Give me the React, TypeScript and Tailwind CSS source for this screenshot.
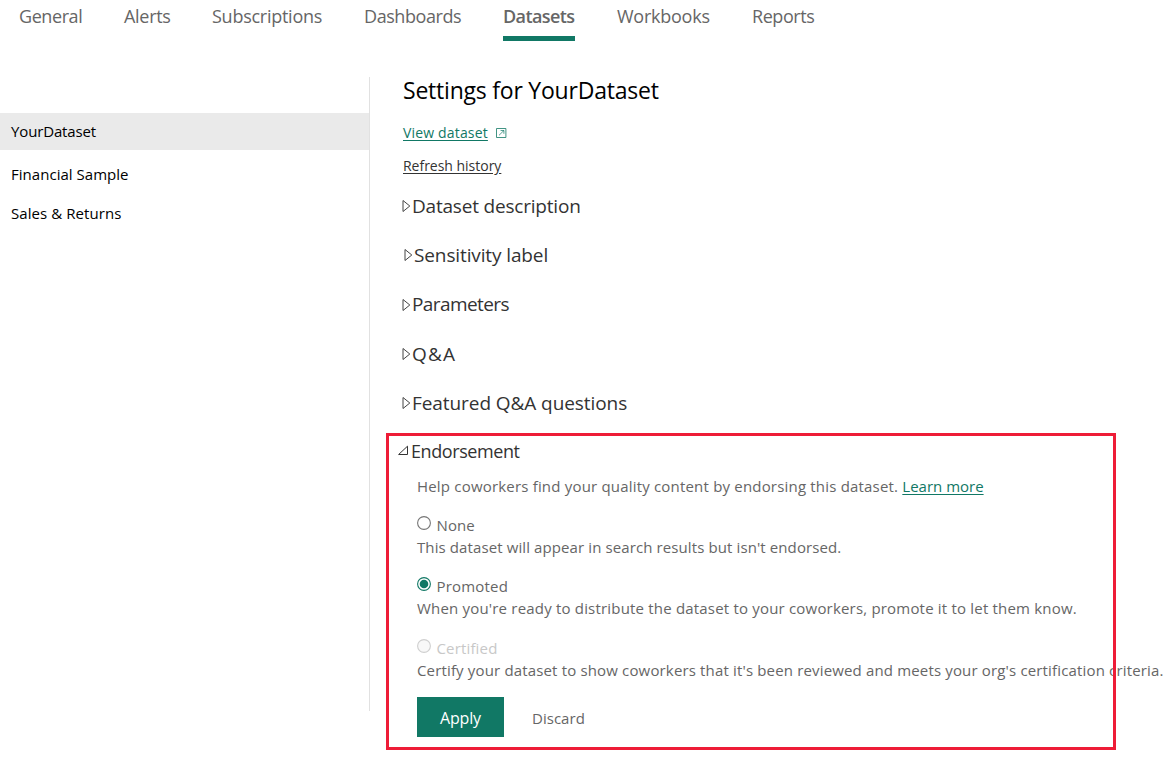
import { useState } from 'react';

const tabs = [
  { label: 'General', className: 'w-[63px] tracking-[-0.42px]' },
  { label: 'Alerts', className: 'w-[46px] tracking-[-0.3px]' },
  { label: 'Subscriptions', className: 'w-[110px] tracking-[-0.26px]' },
  { label: 'Dashboards', className: 'w-[97px] tracking-[-0.43px]' },
  { label: 'Datasets', className: 'w-[72px] tracking-[-0.6px]' },
  { label: 'Workbooks', className: 'w-[93px] tracking-[-0.25px]' },
  { label: 'Reports', className: 'w-[63px] tracking-[-0.45px]' },
];

const sections = [
  { label: 'Dataset description', className: 'tracking-[-0.2px]' },
  { label: 'Sensitivity label', className: 'pl-[2px] tracking-[-0.12px]' },
  { label: 'Parameters', className: 'tracking-[-0.6px]' },
  { label: 'Q&A', className: 'tracking-[1.2px]' },
  { label: 'Featured Q&A questions', className: 'tracking-[-0.07px]' },
];

const options = [
  {
    id: 'none',
    label: 'None',
    text: "This dataset will appear in search results but isn't endorsed.",
    className: 'mt-[17px] tracking-[0.105px]',
  },
  {
    id: 'promoted',
    label: 'Promoted',
    text: "When you're ready to distribute the dataset to your coworkers, promote it to let them know.",
    className: 'mt-[17px] tracking-[0.19px]',
  },
  {
    id: 'certified',
    label: 'Certified',
    text: "Certify your dataset to show coworkers that it's been reviewed and meets your org's certification criteria.",
    className: 'mt-[18px] tracking-[0.157px]',
    disabled: true,
  },
];

function Radio({ checked, disabled }: { checked: boolean; disabled?: boolean }) {
  return (
    <svg width="14" height="14" viewBox="0 0 14 14" className="mt-[2px] shrink-0">
      <circle
        cx="7"
        cy="7"
        r="6.4"
        fill={disabled ? '#f8f8f8' : '#fff'}
        stroke={disabled ? '#cfcfcf' : checked ? '#117865' : '#767676'}
        strokeWidth="1.1"
      />
      {checked && <circle cx="7" cy="7" r="4.3" fill="#117865" />}
    </svg>
  );
}

export default function App() {
  const [selected, setSelected] = useState('promoted');

  return (
    <div className="flex h-[758px] w-[1164px] flex-col overflow-hidden bg-white font-['Open_Sans','Noto_Sans',sans-serif]">
      <nav className="flex h-[41px] gap-[42px] pl-[19px] text-[18px] leading-[32px] text-[#666]">
        {tabs.map((t) => (
          <a
            key={t.label}
            className={`h-[41px] shrink-0 whitespace-nowrap ${t.className} ${
              t.label === 'Datasets' ? 'border-b-[5px] border-[#117865] font-semibold' : ''
            }`}
          >
            {t.label}
          </a>
        ))}
      </nav>

      <div className="flex flex-1">
        <aside className="mt-[36px] h-[634px] w-[370px] shrink-0 border-r border-[#e1e1e1] pt-[36px] text-[15px] text-black">
          <div className="h-[37px] bg-[#eaeaea] pl-[11px] leading-[37px] tracking-[-0.14px]">YourDataset</div>
          <div className="mt-[5px] pl-[11px] leading-[39px] tracking-[0.03px]">Financial Sample</div>
          <div className="pl-[11px] leading-[39px] tracking-[0.07px]">Sales &amp; Returns</div>
        </aside>

        <main className="min-w-0 flex-1 whitespace-nowrap pt-[33px]">
          <h1 className="pl-[33px] text-[23px] leading-[32px] tracking-[-0.22px] text-black">
            Settings for YourDataset
          </h1>
          <div className="mt-[17px] flex items-center pl-[33px] text-[14px] leading-[20px]">
            <a className="tracking-[0.17px] text-[#117865] underline underline-offset-2">View dataset</a>
            <svg
              width="11"
              height="10"
              viewBox="0 0 11 10"
              fill="none"
              stroke="#117865"
              className="ml-[8px]"
            >
              <path d="M.5.5h9.4v9H.5z" strokeWidth=".8" />
              <path d="M4.6 2.5h3.3v3.3M7.9 2.5 3 7.3" strokeWidth=".7" />
            </svg>
          </div>
          <div className="mt-[13px] pl-[33px] text-[14px] leading-[20px] tracking-[-0.02px] text-[#333]">
            <a className="underline underline-offset-2">Refresh history</a>
          </div>

          <div className="mt-[5.5px] pl-[32px] text-[19px] text-[#333]">
            {sections.map((s) => (
              <div key={s.label} className={`flex h-[49.25px] items-center ${s.className}`}>
                <svg width="10" height="14" viewBox="0 0 10 14" fill="none" stroke="#444">
                  <path d="M1 1.5v11L7.8 7z" />
                </svg>
                <span>{s.label}</span>
              </div>
            ))}
          </div>

          <section className="relative ml-[16px] mt-[5.25px] h-[317px] w-[730px]">
            <h2 className="flex pl-[11px] pt-[6px] text-[18px] leading-[24px] tracking-[-0.42px] text-[#333]">
              <svg width="14" height="24" viewBox="0 0 14 24" fill="none" stroke="#333">
                <path d="M1.6 15.5h8.9V7.2z" />
              </svg>
              <span>Endorsement</span>
            </h2>
            <div className="pl-[31px] text-[15px] leading-[22px] text-[#666]">
              <p className="mt-[12px] tracking-[0.19px]">
                Help coworkers find your quality content by endorsing this dataset.{' '}
                <a className="tracking-normal text-[#117865] underline underline-offset-2">Learn more</a>
              </p>
              {options.map((o) => (
                <div key={o.id} className={o.className}>
                  <label
                    className={`flex h-[22px] ${o.disabled ? 'text-[#c8c8c8]' : ''}`}
                    onClick={() => !o.disabled && setSelected(o.id)}
                  >
                    <Radio checked={selected === o.id} disabled={o.disabled} />
                    <span className="ml-[5.5px]">{o.label}</span>
                  </label>
                  <p>{o.text}</p>
                </div>
              ))}
              <div className="mt-[16px] flex">
                <button className="h-[40px] w-[87px] bg-[#117865] pt-[2px] text-[16px] font-medium tracking-[-0.15px] text-white">
                  Apply
                </button>
                <button className="ml-[28px] pt-[2px] tracking-[0.03px]">Discard</button>
              </div>
            </div>
            <div className="pointer-events-none absolute inset-0 border-[3px] border-[#ee1c37]" />
          </section>
        </main>
      </div>
    </div>
  );
}
